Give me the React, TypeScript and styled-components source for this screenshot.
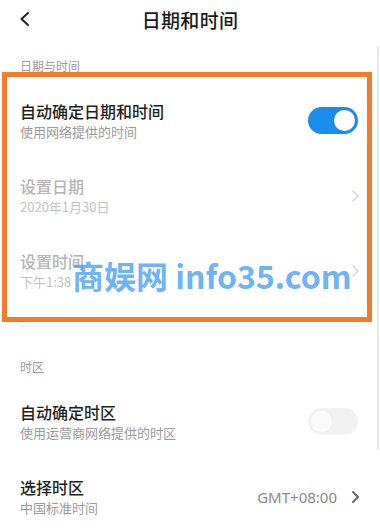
import React from "react";
import styled, { createGlobalStyle } from "styled-components";

const GlobalStyle = createGlobalStyle`
  html, body {
    margin: 0;
    padding: 0;
    background: #ffffff;
  }
  body {
    font-family: "Noto Sans CJK SC", "Noto Sans", sans-serif;
  }
`;

type RowProps = {
  title: string;
  sub: string;
  disabled?: boolean;
  toggle?: "on" | "off";
  value?: string;
  arrow?: boolean;
};

const Chevron: React.FC<{ dark?: boolean }> = ({ dark }) => (
  <svg width="10" height="14" viewBox="0 0 10 14">
    <path
      d="M3 2 L8 7 L3 12"
      fill="none"
      stroke={dark ? "#666" : "#d0d0d0"}
      strokeWidth={dark ? 2 : 1.4}
      strokeLinecap="round"
      strokeLinejoin="round"
    />
  </svg>
);

const SettingRow: React.FC<RowProps> = ({
  title,
  sub,
  disabled,
  toggle,
  value,
  arrow,
}) => (
  <Row>
    <TextCol>
      <RowTitle $disabled={disabled}>{title}</RowTitle>
      <RowSub $disabled={disabled}>{sub}</RowSub>
    </TextCol>
    {toggle && (
      <Switch $on={toggle === "on"}>
        <Knob $on={toggle === "on"} />
      </Switch>
    )}
    {(value || arrow) && (
      <RightSide>
        {value && <Value>{value}</Value>}
        <Chevron dark={!disabled} />
      </RightSide>
    )}
  </Row>
);

const App: React.FC = () => {
  return (
    <Page>
      <GlobalStyle />
      <Header>
        <BackButton>
          <svg width="14" height="16" viewBox="0 0 14 16">
            <path
              d="M10 2 L3.5 8 L10 14"
              fill="none"
              stroke="#222"
              strokeWidth="2"
              strokeLinecap="round"
              strokeLinejoin="round"
            />
          </svg>
        </BackButton>
        <Title>日期和时间</Title>
      </Header>

      <SectionLabel>日期与时间</SectionLabel>
      <SettingRow
        title="自动确定日期和时间"
        sub="使用网络提供的时间"
        toggle="on"
      />
      <SettingRow title="设置日期" sub="2020年1月30日" disabled arrow />
      <SettingRow title="设置时间" sub="下午1:38" disabled arrow />

      <Divider />

      <SectionLabel $gap>时区</SectionLabel>
      <SettingRow
        title="自动确定时区"
        sub="使用运营商网络提供的时区"
        toggle="off"
      />
      <SettingRow title="选择时区" sub="中国标准时间" value="GMT+08:00" />

      <Highlight />
      <Watermark>商娱网 info35.com</Watermark>
      <ScrollBar />
    </Page>
  );
};

const Page = styled.div`
  position: relative;
  width: 380px;
  height: 532px;
  overflow: hidden;
  background: #fff;
`;

const Header = styled.div`
  position: relative;
  height: 38px;
  display: flex;
  align-items: center;
  justify-content: center;
`;

const BackButton = styled.div`
  position: absolute;
  left: 18px;
  top: 11px;
  display: flex;
`;

const Title = styled.div`
  font-size: 19px;
  font-weight: 500;
  color: #1a1a1a;
  letter-spacing: 0.3px;
`;

const SectionLabel = styled.div<{ $gap?: boolean }>`
  padding: ${(p) => (p.$gap ? "32px" : "20px")} 20px 9px;
  font-size: 12px;
  line-height: 16px;
  color: #9a9a9a;
`;

const Row = styled.div`
  height: 75px;
  padding: 0 20px;
  display: flex;
  align-items: center;
  justify-content: space-between;
  box-sizing: border-box;
`;

const TextCol = styled.div`
  display: flex;
  flex-direction: column;
  gap: 1px;
`;

const RowTitle = styled.div<{ $disabled?: boolean }>`
  font-size: 16px;
  line-height: 22px;
  font-weight: 500;
  color: ${(p) => (p.$disabled ? "#b4b4b4" : "#1e1e1e")};
`;

const RowSub = styled.div<{ $disabled?: boolean }>`
  font-size: 13px;
  line-height: 18px;
  color: ${(p) => (p.$disabled ? "#c2c2c2" : "#9a9a9a")};
`;

const Switch = styled.div<{ $on: boolean }>`
  width: 50px;
  height: 27px;
  border-radius: 14px;
  background: ${(p) => (p.$on ? "#1a8cec" : "#f1f1f1")};
  display: flex;
  align-items: center;
  justify-content: ${(p) => (p.$on ? "flex-end" : "flex-start")};
  padding: 0 3px;
  box-sizing: border-box;
  margin-right: 2px;
`;

const Knob = styled.div<{ $on: boolean }>`
  width: 21px;
  height: 21px;
  border-radius: 50%;
  background: ${(p) => (p.$on ? "#ffffff" : "#fafafa")};
`;

const RightSide = styled.div`
  display: flex;
  align-items: center;
  gap: 13px;
`;

const Value = styled.div`
  font-size: 15px;
  color: #8a8a8a;
  font-family: "Noto Sans", sans-serif;
`;

const Divider = styled.div`
  height: 1px;
  margin: 18px 20px 0;
  background: #eeeeee;
`;

const Highlight = styled.div`
  position: absolute;
  left: 2px;
  top: 72px;
  width: 370px;
  height: 250px;
  box-sizing: border-box;
  border: 5px solid #f47a2c;
  pointer-events: none;
`;

const Watermark = styled.div`
  position: absolute;
  left: 72px;
  top: 255px;
  font-size: 32px;
  font-weight: 700;
  line-height: 40px;
  color: rgba(70, 158, 240, 0.8);
  font-family: "Noto Sans CJK SC", "Noto Sans", sans-serif;
  white-space: nowrap;
`;

const ScrollBar = styled.div`
  position: absolute;
  right: 1px;
  top: 46px;
  width: 2px;
  height: 404px;
  background: #e8e8e8;
`;

export default App;
